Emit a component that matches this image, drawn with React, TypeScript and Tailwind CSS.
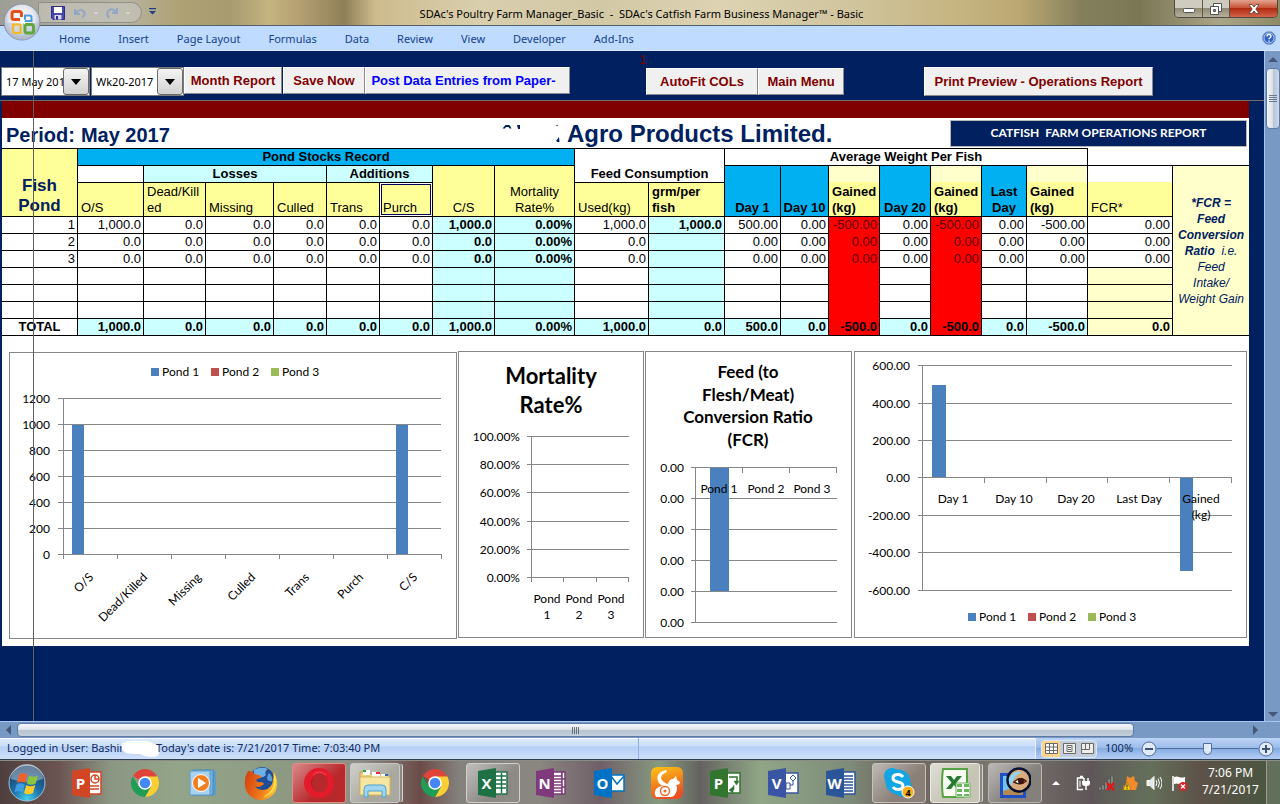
import React from "react";

const GRID = "border-r border-b border-black p-0 px-[3px]";

const columnWidths = [
  "w-[76px]", "w-[66px]", "w-[62px]", "w-[68px]", "w-[53px]", "w-[53px]", "w-[53px]",
  "w-[62px]", "w-[80px]", "w-[74px]", "w-[76px]", "w-[56px]", "w-[48px]", "w-[51px]",
  "w-[51px]", "w-[51px]", "w-[45px]", "w-[61px]", "w-[85px]", "w-[76px]",
];

const dataRows: string[][] = [
  ["1", "1,000.0", "0.0", "0.0", "0.0", "0.0", "0.0", "1,000.0", "0.00%", "1,000.0", "1,000.0", "500.00", "0.00", "-500.00", "0.00", "-500.00", "0.00", "-500.00", "0.00"],
  ["2", "0.0", "0.0", "0.0", "0.0", "0.0", "0.0", "0.0", "0.00%", "0.0", "", "0.00", "0.00", "0.00", "0.00", "0.00", "0.00", "0.00", "0.00"],
  ["3", "0.0", "0.0", "0.0", "0.0", "0.0", "0.0", "0.0", "0.00%", "0.0", "", "0.00", "0.00", "0.00", "0.00", "0.00", "0.00", "0.00", "0.00"],
  Array(19).fill(""),
  Array(19).fill(""),
  Array(19).fill(""),
];

const totals = ["1,000.0", "0.0", "0.0", "0.0", "0.0", "0.0", "1,000.0", "0.00%", "1,000.0", "0.0", "500.0", "0.0", "-500.0", "0.0", "-500.0", "0.0", "-500.0", "0.0"];

function bodyCellClass(col: number, row: number) {
  if (col === 13 || col === 15) return "bg-[#ff0000] text-[#5a0000] border-b-[#ff0000]";
  if (col === 7 || col === 8 || col === 10) return "bg-[#ccffff] font-bold border-b-black";
  if (col === 18 && row > 2) return "bg-[#ffffcc] border-b-black";
  return "bg-white border-b-black";
}

function totalCellClass(col: number) {
  if (col === 13 || col === 15) return "bg-[#ff0000]";
  if (col === 18) return "bg-[#ffffcc]";
  return "bg-[#ccffff]";
}

function PondTable() {
  const blue = "bg-[#00b0f0] font-bold text-center align-bottom";
  const yellow = "bg-[#ffff99] font-normal align-bottom";
  const gained = "bg-[linear-gradient(#ffffcc_16px,#ffff99_16px)] font-bold text-left align-bottom";
  return (
    <table className="w-full table-fixed border-separate border-spacing-0 text-[13px] leading-4 text-black">
      <colgroup>
        {columnWidths.map((w, i) => (
          <col key={i} className={w} />
        ))}
      </colgroup>
      <tbody>
        <tr className="h-[18px]">
          <th rowSpan={3} className={`${GRID} border-t bg-[#ffff99] text-center align-bottom text-[17px] leading-5 text-[#002060]`}>
            Fish<br />Pond
          </th>
          <th colSpan={8} className={`${GRID} ${blue} border-t`}>Pond Stocks Record</th>
          <th colSpan={2} rowSpan={2} className={`${GRID} border-t bg-white text-center align-bottom`}>Feed Consumption</th>
          <th colSpan={7} className={`${GRID} border-t bg-white text-center`}>Average Weight Per Fish</th>
          <td className="border-b border-black p-0" />
          <td className="border-b border-black p-0" />
        </tr>
        <tr className="h-[17px]">
          <td className={`${GRID} bg-white`} />
          <th colSpan={3} className={`${GRID} bg-[#ccffff] text-center`}>Losses</th>
          <th colSpan={2} className={`${GRID} bg-[#ccffff] text-center`}>Additions</th>
          <th rowSpan={2} className={`${GRID} ${yellow} text-center`}>C/S</th>
          <th rowSpan={2} className={`${GRID} ${yellow} text-center`}>Mortality Rate%</th>
          <th rowSpan={2} className={`${GRID} ${blue}`}>Day 1</th>
          <th rowSpan={2} className="border-r border-b border-black bg-[#00b0f0] p-0 text-center align-bottom">Day 10</th>
          <th rowSpan={2} className={`${GRID} ${gained}`}>Gained (kg)</th>
          <th rowSpan={2} className="border-r border-b border-black bg-[#00b0f0] p-0 text-center align-bottom">Day 20</th>
          <th rowSpan={2} className={`${GRID} ${gained}`}>Gained (kg)</th>
          <th rowSpan={2} className={`${GRID} ${blue}`}>Last Day</th>
          <th rowSpan={2} className={`${GRID} ${gained}`}>Gained (kg)</th>
          <th rowSpan={2} className={`${GRID} bg-[linear-gradient(#ffffff_16px,#ffff99_16px)] text-left align-bottom font-normal`}>FCR*</th>
          <td rowSpan={9} className="border-b border-black bg-[#ffffcc] p-0 text-center align-middle text-[12px] italic leading-4 text-[#002060]">
            <b>*FCR =<br />Feed<br />Conversion<br />Ratio</b>&nbsp; i.e.<br />Feed<br />Intake/<br />Weight Gain
          </td>
        </tr>
        <tr className="h-[34px]">
          <th className={`${GRID} ${yellow} text-left`}>O/S</th>
          <th className={`${GRID} ${yellow} text-left break-all`}>Dead/Killed</th>
          <th className={`${GRID} ${yellow} text-left`}>Missing</th>
          <th className={`${GRID} ${yellow} text-left`}>Culled</th>
          <th className={`${GRID} ${yellow} text-left`}>Trans</th>
          <th className={`${GRID} ${yellow} text-left shadow-[inset_0_0_0_1px_#fff,inset_0_0_0_2px_#000060]`}>Purch</th>
          <th className={`${GRID} ${yellow} text-left`}>Used(kg)</th>
          <th className={`${GRID} bg-[#ffff99] text-left align-bottom`}>grm/per fish</th>
        </tr>
        {dataRows.map((row, r) => (
          <tr key={r} className="h-[17px] text-right">
            {row.map((value, c) => (
              <td key={c} className={`border-r border-r-black border-b p-0 pr-0.5 ${bodyCellClass(c, r)}`}>{value}</td>
            ))}
          </tr>
        ))}
        <tr className="h-[17px] text-right font-bold">
          <th className={`${GRID} bg-white text-center`}>TOTAL</th>
          {totals.map((value, i) => (
            <td key={i} className={`border-r border-b border-black p-0 pr-0.5 ${totalCellClass(i + 1)}`}>{value}</td>
          ))}
        </tr>
      </tbody>
    </table>
  );
}

/* ---------- charts ---------- */

const AXIS = "#868686";
const BAR = "#4a80bd";

function ChartText({ x, y, anchor = "middle", children }: { x: number; y: number; anchor?: "start" | "middle" | "end"; children: React.ReactNode }) {
  return <text x={x} y={y} textAnchor={anchor} fontSize={12} fill="#000">{children}</text>;
}

function Legend({ x, y }: { x: number; y: number }) {
  const items = [
    { label: "Pond 1", color: "#4a80bd" },
    { label: "Pond 2", color: "#c0504d" },
    { label: "Pond 3", color: "#9bbb59" },
  ];
  return (
    <g>
      {items.map((item, i) => (
        <g key={item.label}>
          <rect x={x + i * 60} y={y} width={8} height={8} fill={item.color} />
          <ChartText x={x + i * 60 + 11} y={y + 8} anchor="start">{item.label}</ChartText>
        </g>
      ))}
    </g>
  );
}

function StockChart() {
  const cats = ["O/S", "Dead/Killed", "Missing", "Culled", "Trans", "Purch", "C/S"];
  return (
    <svg viewBox="9 351 448 288" className="block w-full" role="img" aria-label="Pond stocks">
      <rect x={9.5} y={352.5} width={447} height={286} fill="#fff" stroke={AXIS} />
      <Legend x={151} y={368} />
      <g stroke={AXIS}>
        {[0, 1, 2, 3, 4, 5, 6].map((i) => (
          <line key={i} x1={58} x2={441} y1={398.5 + i * 26} y2={398.5 + i * 26} />
        ))}
        <line x1={63.5} x2={63.5} y1={398} y2={559} />
        {[1, 2, 3, 4, 5, 6, 7].map((i) => (
          <line key={i} x1={63.5 + i * 54} x2={63.5 + i * 54} y1={554} y2={559} />
        ))}
      </g>
      <rect x={72} y={425} width={12} height={129} fill={BAR} />
      <rect x={396} y={425} width={12} height={129} fill={BAR} />
      {[1200, 1000, 800, 600, 400, 200, 0].map((v, i) => (
        <ChartText key={v} x={50} y={403 + i * 26} anchor="end">{v}</ChartText>
      ))}
      {cats.map((c, i) => (
        <text key={c} transform={`translate(${94 + i * 54} 578) rotate(-45)`} textAnchor="end" fontSize={12} fill="#000">{c}</text>
      ))}
    </svg>
  );
}

function MortalityChart() {
  return (
    <svg viewBox="458 351 186 288" className="block w-full" role="img" aria-label="Mortality rate">
      <rect x={458.5} y={351.5} width={185} height={286} fill="#fff" stroke={AXIS} />
      <g fontSize={22} fontWeight={700} textAnchor="middle" fill="#000">
        <text x={551} y={384}>Mortality</text>
        <text x={551} y={413}>Rate%</text>
      </g>
      <g stroke={AXIS}>
        {[436.5, 464.5, 492.5, 521.5, 549.5, 577.5].map((y) => (
          <line key={y} x1={527} x2={629} y1={y} y2={y} />
        ))}
        {[531.5, 563.5, 596.5, 628.5].map((x, i) => (
          <line key={x} x1={x} x2={x} y1={i === 0 ? 436 : 577} y2={582} />
        ))}
      </g>
      {["100.00%", "80.00%", "60.00%", "40.00%", "20.00%", "0.00%"].map((v, i) => (
        <ChartText key={v} x={520} y={441 + Math.round(i * 28.2)} anchor="end">{v}</ChartText>
      ))}
      {[1, 2, 3].map((n, i) => (
        <g key={n}>
          <ChartText x={547 + i * 32} y={603}>Pond</ChartText>
          <ChartText x={547 + i * 32} y={619}>{n}</ChartText>
        </g>
      ))}
    </svg>
  );
}

function FcrChart() {
  return (
    <svg viewBox="645 351 207 288" className="block w-full" role="img" aria-label="Feed conversion ratio">
      <rect x={645.5} y={351.5} width={206} height={286} fill="#fff" stroke={AXIS} />
      <g fontSize={17} fontWeight={700} textAnchor="middle" fill="#000">
        <text x={748} y={378}>Feed (to</text>
        <text x={748} y={401}>Flesh/Meat)</text>
        <text x={748} y={423}>Conversion Ratio</text>
        <text x={748} y={446}>(FCR)</text>
      </g>
      <g stroke={AXIS}>
        {[0, 1, 2, 3, 4, 5].map((i) => (
          <line key={i} x1={691} x2={837} y1={467.5 + i * 31} y2={467.5 + i * 31} />
        ))}
        <line x1={695.5} x2={695.5} y1={467} y2={623} />
        {[742.5, 789.5, 836.5].map((x) => (
          <line key={x} x1={x} x2={x} y1={467} y2={473} />
        ))}
      </g>
      <rect x={710} y={468} width={19} height={123} fill={BAR} />
      {[0, 1, 2, 3, 4, 5].map((i) => (
        <ChartText key={i} x={684} y={472 + i * 31} anchor="end">0.00</ChartText>
      ))}
      <ChartText x={719} y={493}>Pond 1</ChartText>
      <ChartText x={766} y={493}>Pond 2</ChartText>
      <ChartText x={812} y={493}>Pond 3</ChartText>
    </svg>
  );
}

function WeightChart() {
  const lines = [365.5, 403.5, 440.5, 477.5, 515.5, 552.5, 590.5];
  const labels = ["600.00", "400.00", "200.00", "0.00", "-200.00", "-400.00", "-600.00"];
  return (
    <svg viewBox="854 351 393 288" className="block w-full" role="img" aria-label="Average weight per fish">
      <rect x={854.5} y={351.5} width={392} height={286} fill="#fff" stroke={AXIS} />
      <g stroke={AXIS}>
        {lines.map((y) => (
          <line key={y} x1={918} x2={1232} y1={y} y2={y} />
        ))}
        <line x1={922.5} x2={922.5} y1={365} y2={591} />
        {[984.5, 1046.5, 1107.5, 1169.5, 1231.5].map((x) => (
          <line key={x} x1={x} x2={x} y1={477} y2={483} />
        ))}
      </g>
      <rect x={932} y={385} width={14} height={92} fill={BAR} />
      <rect x={1180} y={478} width={13} height={93} fill={BAR} />
      {labels.map((v, i) => (
        <ChartText key={v} x={910} y={lines[i] + 4.5} anchor="end">{v}</ChartText>
      ))}
      <ChartText x={953} y={503}>Day 1</ChartText>
      <ChartText x={1014} y={503}>Day 10</ChartText>
      <ChartText x={1076} y={503}>Day 20</ChartText>
      <ChartText x={1139} y={503}>Last Day</ChartText>
      <ChartText x={1201} y={503}>Gained</ChartText>
      <ChartText x={1201} y={519}>(kg)</ChartText>
      <Legend x={968} y={613} />
    </svg>
  );
}

/* ---------- window chrome ---------- */

function OfficeOrb() {
  return (
    <svg viewBox="0 0 38 38" className="size-[38px]" aria-hidden="true">
      <defs>
        <radialGradient id="orb" cx="50%" cy="40%" r="60%">
          <stop offset="0" stopColor="#ffffff" />
          <stop offset="0.6" stopColor="#e3e6ec" />
          <stop offset="1" stopColor="#9aa7bd" />
        </radialGradient>
      </defs>
      <circle cx="19" cy="19" r="18" fill="url(#orb)" stroke="#8b93a3" />
      <path d="M2 20a17 17 0 0 0 34 0z" fill="#b9c3d6" opacity=".45" />
      <g fill="none" strokeWidth="3">
        <path d="M17 16.500h-6q-2 0-2-2v-4q0-2 2-2h5q2.500 0 2.500 2.500v3" stroke="#e2511a" />
        <path d="M22 12.500h4.500q2 0 2 2v3.500h-6.500z" stroke="#4e9bdc" strokeWidth="2" />
        <path d="M10 21.500h7.500v8.500h-5.500q-2 0-2-2z" stroke="#f5b921" strokeWidth="2.200" />
        <path d="M22 21.500h6.500q2 0 2 2v4.500q0 2-2 2h-4.500q-2 0-2-2z" stroke="#5fa83c" />
      </g>
      <path d="M18 17l4 4m0-4l-4 4" stroke="#fff" strokeWidth="1.200" />
    </svg>
  );
}

function TitleBar() {
  return (
    <header className="relative flex h-[25px] shrink-0 items-start bg-[linear-gradient(90deg,#9d9d97_0,#b9b5a4_120px,#aea174_180px,#a89b70_230px,#c4b580_270px,#b49f72_300px,#8f8058_345px,#cdbb8d_375px,#d9cfae_480px,#d2c8a6_600px,#ddd3b2_720px,#cfc39c_860px,#c6b480_960px,#bba873_1020px,#85805c_1080px,#7b7654_1140px,#aaa588_1220px,#8e8966_1280px)]">
      <div className="ml-[38px] mt-0.5 flex h-[21px] w-[104px] items-center rounded-r-full border border-[#8f8f87] bg-[#c3c1b6]/80 pl-3">
        <button aria-label="Save" className="mr-2">
          <svg viewBox="0 0 14 14" className="size-[14px]">
            <path d="M.5.500h13v13H2L.5 12z" fill="#4a48b0" stroke="#2e2c86" />
            <rect x="3" y="1" width="8" height="6" fill="#fff" />
            <rect x="3.500" y="9" width="7" height="4.500" fill="#d8d8e8" />
            <rect x="5" y="10" width="2" height="3.500" fill="#2e2c86" />
          </svg>
        </button>
        <button aria-label="Undo" className="flex items-center gap-1.5">
          <svg viewBox="0 0 14 14" className="size-[14px]" fill="none" stroke="#8fa6c4" strokeWidth="2"><path d="M2 3v5h5M3 7q4-5 8-1.500q2 3-2 6" /></svg>
          <svg viewBox="0 0 6 4" className="h-1 w-1.5" fill="none" stroke="#e6e6e0"><path d="M1 1l2 2l2-2" /></svg>
        </button>
        <button aria-label="Redo" className="ml-1.5 flex items-center gap-1.5">
          <svg viewBox="0 0 14 14" className="size-[14px]" fill="none" stroke="#8fa6c4" strokeWidth="2"><path d="M12 2v5h-5M11 6q-4-5-8-1q-2 3 1 7" /></svg>
          <svg viewBox="0 0 6 4" className="h-1 w-1.5" fill="none" stroke="#e6e6e0"><path d="M1 1l2 2l2-2" /></svg>
        </button>
      </div>
      <button aria-label="Customize Quick Access Toolbar" className="ml-[7px] mt-2">
        <svg viewBox="0 0 7 7" className="block size-[7px]" fill="#1f3f86"><path d="M0 0h7v1.200H0zM0 3h7L3.500 6.500z" /></svg>
      </button>
      <h1 className="flex-1 truncate text-center text-[11px] leading-[27px] text-black">
        SDAc's Poultry Farm Manager_Basic&nbsp; -&nbsp; SDAc's Catfish Farm Business Manager™ - Basic
      </h1>
      <div className="ml-[47px] mr-[2px] flex h-[18px] w-[104px] overflow-hidden rounded-b-[5px] border border-t-0 border-[#4e4b40] text-white">
        <button aria-label="Minimize" className="flex w-7 items-center justify-center border-r border-[#5b5848] bg-[linear-gradient(#cfccbf_45%,#8f8b74_50%,#b4b09b)]">
          <svg viewBox="0 0 12 5" className="mt-1 h-[5px] w-3"><rect x=".5" y=".5" width="11" height="4" rx="1" fill="#fff" stroke="#555" /></svg>
        </button>
        <button aria-label="Restore Down" className="flex w-[27px] items-center justify-center border-r border-[#5b5848] bg-[linear-gradient(#cfccbf_45%,#8f8b74_50%,#b4b09b)]">
          <svg viewBox="0 0 12 12" className="size-3" fill="#fff" stroke="#555"><path d="M3.500.500h8v8h-8z" /><path d="M.5 3.500h8v8h-8z" /><path d="M3.500 6.500h2v2h-2z" fill="#8f8b74" /></svg>
        </button>
        <button aria-label="Close" className="flex flex-1 items-center justify-center bg-[linear-gradient(#e3a48f_0,#c9553a_45%,#b02a10_50%,#d5634a)]">
          <svg viewBox="0 0 12 10" className="h-2.5 w-3"><path d="M1 .5h3L6 3L8 .500h3L7.800 5L11 9.500H8L6 7L4 9.500H1L4.200 5z" fill="#fff" stroke="#5a3a35" strokeWidth=".8" /></svg>
        </button>
      </div>
      <button aria-label="Office Button" className="absolute left-[3px] top-[3px] z-10"><OfficeOrb /></button>
    </header>
  );
}

const tabs = ["Home", "Insert", "Page Layout", "Formulas", "Data", "Review", "View", "Developer", "Add-Ins"];

function RibbonTabs() {
  return (
    <nav className="flex h-[26px] shrink-0 items-center border-t border-b border-t-[#55606e] border-b-[#dbe8fa] bg-[#bfdbff] pl-[59px] pr-1 text-[11px] text-[#15428b]">
      <div className="flex gap-[28px] pt-0.5">
        {tabs.map((t) => (
          <button key={t}>{t}</button>
        ))}
      </div>
      <button aria-label="Help" className="ml-auto">
        <svg viewBox="0 0 14 14" className="size-[14px]">
          <circle cx="7" cy="7" r="6.500" fill="#2c62c8" stroke="#8aa5d6" />
          <circle cx="7" cy="7" r="5" fill="none" stroke="#fff" strokeWidth=".7" />
          <path d="M5 5.500q0-2 2-2t2 1.800q0 1-1.200 1.700q-.8.500-.8 1.200M7 9.500v1.300" fill="none" stroke="#fff" strokeWidth="1.400" />
        </svg>
      </button>
    </nav>
  );
}

function ComboBox({ label, value, className }: { label: string; value: string; className: string }) {
  return (
    <div className={`relative border border-[#7a7a7a] bg-white ${className}`}>
      <select aria-label={label} className="size-full appearance-none bg-transparent pl-1 text-[11px] text-black outline-none" defaultValue={value}>
        <option>{value}</option>
      </select>
      <span className="pointer-events-none absolute inset-y-0 right-0 flex w-[26px] items-center justify-center rounded-[3px] border border-[#6a6a6a] bg-[linear-gradient(#f4f4f4,#d2d2d2)]">
        <svg viewBox="0 0 10 6" className="h-1.5 w-2.5"><path d="M0 0h10L5 6z" fill="#000" /></svg>
      </span>
    </div>
  );
}

function SheetButton({ className, children }: { className: string; children: React.ReactNode }) {
  return (
    <button className={`whitespace-nowrap border border-t-white border-l-white border-r-[#8a8a8a] border-b-[#8a8a8a] bg-[#f0f0f0] text-[13px] font-bold ${className}`}>
      {children}
    </button>
  );
}

function SheetToolbar() {
  return (
    <div className="h-[50px] shrink-0 border-b border-[#6b6b6b] font-['Liberation_Sans',Arial,sans-serif]">
      <p className="h-4 pl-[22px] text-center text-[13px] leading-[17px] text-[#800000]">1</p>
      <div className="flex items-start pl-px">
        <ComboBox label="Date" value="17 May 201" className="h-[29px] w-[89px] font-['Noto_Sans',sans-serif]" />
        <ComboBox label="Week" value="Wk20-2017" className="ml-px h-[29px] w-[93px] font-['Noto_Sans',sans-serif]" />
        <SheetButton className="h-[27px] w-[98px] text-[#800000]">Month Report</SheetButton>
        <SheetButton className="ml-px h-[27px] w-[82px] text-[#800000]">Save Now</SheetButton>
        <SheetButton className="h-[27px] w-[205px] pr-2 text-[#0000ff]">Post Data Entries from Paper-</SheetButton>
        <SheetButton className="ml-[76px] mt-px h-[27px] w-[112px] text-[#800000]">AutoFit COLs</SheetButton>
        <SheetButton className="mt-px h-[27px] w-[86px] text-[#800000]">Main Menu</SheetButton>
        <SheetButton className="ml-[80px] h-[29px] w-[229px] text-[#800000]">Print Preview - Operations Report</SheetButton>
      </div>
    </div>
  );
}

function ReportHeading() {
  return (
    <div className="flex h-[30px] items-center bg-white pl-1 text-[#002060]">
      <h2 className="flex w-[495px] gap-1.5 pt-1 text-[20px] font-bold leading-6">
        <span>Period:</span>
        <span>May 2017</span>
      </h2>
      <svg viewBox="0 0 60 24" className="mr-[6px] h-6 w-[60px] shrink-0" fill="#002060" aria-hidden="true">
        <path d="M1.500 7.500L4.500 4h4l2 3.500h-2l-1-1.500h-2.500l-1 1.500zM16 4h3v4h-2zM54 5l2.500-1l.5 1zM55 20l3-4l.5 5h-2z" />
      </svg>
      <p className="whitespace-nowrap pt-0.5 text-[24px] font-bold leading-7">Agro Products Limited.</p>
      <p className="ml-auto mr-[2px] flex h-[27px] w-[297px] items-center justify-center whitespace-pre border border-[#b8b8b8] bg-[#002060] font-['Lato',sans-serif] text-[12px] font-bold text-white">
        CATFISH  FARM OPERATIONS REPORT
      </p>
    </div>
  );
}

function VerticalScrollbar() {
  return (
    <div className="flex w-4 shrink-0 flex-col items-center border-l border-[#a9c6ee] bg-[#7799c4]" aria-hidden="true">
      <svg viewBox="0 0 10 5" className="mb-1.5 mt-1.5 h-[5px] w-2.5"><path d="M0 5L5 0L10 5z" fill="#46587a" /></svg>
      <div className="flex h-[61px] w-[14px] items-center justify-center rounded-sm border border-[#5d7aa6] bg-[linear-gradient(90deg,#f2f5fa,#dde3ec_45%,#b9c5d6_55%,#cfd8e5)]">
        <svg viewBox="0 0 8 7" className="h-[7px] w-2" stroke="#6b7a92"><path d="M0 .5h8M0 2.500h8M0 4.500h8M0 6.500h8" /></svg>
      </div>
      <svg viewBox="0 0 10 5" className="mb-1 mt-auto h-[5px] w-2.5"><path d="M0 0L5 5L10 0z" fill="#46587a" /></svg>
    </div>
  );
}

function HorizontalScrollbar() {
  return (
    <div className="flex h-[17px] shrink-0 items-center border-t border-[#a9c6ee] bg-[#7799c4]" aria-hidden="true">
      <svg viewBox="0 0 5 10" className="mx-1.5 h-2.5 w-[5px]"><path d="M5 0L0 5L5 10z" fill="#46587a" /></svg>
      <div className="flex h-[14px] flex-1 items-center justify-center rounded-sm border border-[#5d7aa6] bg-[linear-gradient(#f4f6f9,#dfe4ec_45%,#b7c3d1_55%,#c6d0dc)]">
        <svg viewBox="0 0 8 7" className="h-[7px] w-2" stroke="#6b6f7a"><path d="M.5 0v7M2.500 0v7M4.500 0v7M6.500 0v7" /></svg>
      </div>
      <svg viewBox="0 0 5 10" className="ml-[119px] mr-[22px] h-2.5 w-[5px]"><path d="M0 0L5 5L0 10z" fill="#46587a" /></svg>
    </div>
  );
}

function ZoomButton({ sign }: { sign: "minus" | "plus" }) {
  return (
    <button aria-label={sign === "plus" ? "Zoom in" : "Zoom out"}>
      <svg viewBox="0 0 16 16" className="block size-4">
        <circle cx="8" cy="8" r="7" fill="#dfe9f8" stroke="#4f6d9e" />
        <path d={sign === "plus" ? "M4 8h8M8 4v8" : "M4 8h8"} stroke="#3d5276" strokeWidth="2" />
      </svg>
    </button>
  );
}

function StatusBar() {
  const viewButton = "flex h-4 w-[18px] items-center justify-center";
  return (
    <div className="flex h-[22px] shrink-0 border-b border-[#303c50] bg-[linear-gradient(#ffffff_1px,#dceafd_1px,#c9defa_38%,#b4cef6_42%,#cfe0f9)] text-[11px] text-[#0f2a5c]">
      <p className="flex w-[639px] shrink-0 items-center whitespace-nowrap border-r border-[#8fb0de] pl-[7px]">
        Logged in User: Bashir
        <svg viewBox="0 0 40 17" className="-ml-1 -mr-1 h-[17px] w-10" aria-hidden="true">
          <path d="M2 3q8-3 20-2q9 0 12 3q6 0 6 5q0 7-6 8q-9 0-14-3q-9 0-14-1q-6-3-4-10z" fill="#fff" />
        </svg>
        Today's date is: 7/21/2017 Time: 7:03:40 PM
      </p>
      <div className="flex-1 border-r border-[#e8f1fd]" />
      <div className="flex items-center bg-[linear-gradient(#bcd4f6,#9dbdea_45%,#86ace2_50%,#b4cef4)] pl-[5px] pr-1.5">
        <div className="mr-2 flex rounded-sm border border-[#dbe8fa] bg-[#c3cddb]">
          <button aria-label="Normal" className={`${viewButton} bg-[#fbd58a]`}>
            <svg viewBox="0 0 13 11" className="h-[11px] w-[13px]" fill="#fff" stroke="#6b6a66"><path d="M.5.500h12v10H.5zM4.500.500v10M8.500.500v10M.5 4h12M.5 7.500h12" /></svg>
          </button>
          <button aria-label="Page Layout view" className={viewButton}>
            <svg viewBox="0 0 13 11" className="h-[11px] w-[13px]" fill="#eee" stroke="#6b6a66"><path d="M.5.500h12v10H.5zM4 2.500h5v6H4zM5 4.500h3M5 6.500h3" /></svg>
          </button>
          <button aria-label="Page Break Preview" className={viewButton}>
            <svg viewBox="0 0 13 11" className="h-[11px] w-[13px]" fill="#eee" stroke="#6b6a66"><path d="M.5.500h12v10H.5zM4.500.500v6M8.500.500v6M.5 6.500h8" /></svg>
          </button>
        </div>
        <button className="mr-2 w-7">100%</button>
        <ZoomButton sign="minus" />
        <input
          type="range"
          aria-label="Zoom"
          defaultValue={50}
          className="h-4 w-[101px] appearance-none bg-[linear-gradient(#4f6d9e,#4f6d9e)] bg-[length:100%_1px] bg-center bg-no-repeat [&::-webkit-slider-thumb]:h-3 [&::-webkit-slider-thumb]:w-[9px] [&::-webkit-slider-thumb]:appearance-none [&::-webkit-slider-thumb]:rounded-b-full [&::-webkit-slider-thumb]:border [&::-webkit-slider-thumb]:border-[#4f6d9e] [&::-webkit-slider-thumb]:bg-[#dfe9f8]"
        />
        <ZoomButton sign="plus" />
      </div>
    </div>
  );
}

/* ---------- taskbar ---------- */

function OfficeTile({ letter, color, children }: { letter: string; color: string; children: React.ReactNode }) {
  return (
    <svg viewBox="0 0 32 32" className="size-8">
      <g fill="#fff" stroke={color} strokeWidth="1.500">{children}</g>
      <path d="M1 4L19 1v30L1 28z" fill={color} />
      <text x="9.500" y="21.500" textAnchor="middle" fontSize="15" fontWeight="700" fill="#fff" fontFamily="Open Sans, sans-serif">{letter}</text>
    </svg>
  );
}

function Chrome() {
  return (
    <svg viewBox="0 0 32 32" className="size-8">
      <path d="M16 16L3.900 9A14 14 0 0 1 28.100 9z" fill="#e0433a" />
      <path d="M16 9.500H28.400A14 14 0 0 1 16 30L22 19.500z" fill="#fbcf33" />
      <path d="M22 19.500L16 30A14 14 0 0 1 3.600 9.500L10 19.500z" fill="#1f9d57" />
      <circle cx="16" cy="16" r="6.800" fill="#fff" />
      <circle cx="16" cy="16" r="5.300" fill="#4587f4" />
    </svg>
  );
}

function Firefox() {
  return (
    <svg viewBox="0 0 34 34" className="size-[34px]">
      <defs>
        <linearGradient id="fox" x1="0" x2="1" y1=".3" y2=".6">
          <stop offset="0" stopColor="#d4430f" />
          <stop offset=".6" stopColor="#f07c1c" />
          <stop offset="1" stopColor="#fdc832" />
        </linearGradient>
      </defs>
      <circle cx="18" cy="13" r="12" fill="#1f4d96" />
      <path d="M10 4q7-4 14-1q-4 2-2 6q-4 4-8 1q-5 0-4-6z" fill="#6fb0e4" />
      <path d="M25 7q4 3 3 8q-4 1-5-3q0-3 2-5z" fill="#5a9ad6" />
      <path d="M4 5q-4 7-3 14A16 15.500 0 0 0 33 18Q33 10 29 5q1 5 0 8q0 9-9 11q-7 0-9-4q3 2 6 0q2-1 3-2q-1-2-3-2q-4 1-5-2q2-2 5-2q1-2-2-3q-5 0-6-3q-3-1-5-1z" fill="url(#fox)" />
      <path d="M30 7q4 7 1 14q-3 8-12 10q10-5 11-14z" fill="#fde04a" />
    </svg>
  );
}

function StartOrb() {
  return (
    <svg viewBox="0 0 38 38" className="size-[38px]">
      <defs>
        <radialGradient id="start" cx="50%" cy="95%" r="90%">
          <stop offset="0" stopColor="#3fd0ee" />
          <stop offset=".45" stopColor="#1c6fa8" />
          <stop offset="1" stopColor="#1b3d63" />
        </radialGradient>
      </defs>
      <circle cx="19" cy="19" r="18" fill="url(#start)" stroke="#9fc0d6" />
      <path d="M3 15a16 15 0 0 1 32 0q-16 6-32 0z" fill="#fff" opacity=".35" />
      <path d="M11 10.500q4-3 8.500 0l-2.200 8.500q-4-2.500-8.300 0z" fill="#f0612b" />
      <path d="M21 11.500q4 2.500 9 0l-2.200 8q-5 2.500-9 0z" fill="#8cc63c" />
      <path d="M8.500 20.500q4-2.500 8.300 0l-2.200 8q-4-2.500-8.300 0z" fill="#3c9fe0" />
      <path d="M18.300 21q4 2.500 9 0l-2.200 8q-5 2.500-9 0z" fill="#fcc927" />
    </svg>
  );
}

const apps: { name: string; tile?: string; stacked?: boolean; icon: React.ReactNode }[] = [
  { name: "PowerPoint", icon: <OfficeTile letter="P" color="#d24625"><path d="M17 5h13v22H17z" /><circle cx="24" cy="12" r="4" /><path d="M24 8v4h4M19 19h9M19 22h9" /></OfficeTile> },
  { name: "Chrome", icon: <Chrome /> },
  { name: "Windows Media Player", icon: (
    <svg viewBox="0 0 32 32" className="size-8"><rect x="9" y="4" width="20" height="24" fill="#5b9ccc" /><rect x="6" y="3" width="20" height="25" fill="#79b4de" stroke="#4788b8" /><rect x="3" y="4" width="20" height="24" fill="#a9d2ee" stroke="#5b9ccc" /><circle cx="14" cy="16" r="8.500" fill="#f08122" stroke="#fff" /><path d="M11 11l8 5l-8 5z" fill="#fff" /></svg>
  ) },
  { name: "Firefox", icon: <Firefox /> },
  { name: "Opera", tile: "border-[#e58b86] bg-[#b8292c]", icon: (
    <svg viewBox="0 0 32 32" className="size-8"><circle cx="16" cy="16" r="11.500" fill="#a81c22" stroke="#e31b2a" strokeWidth="7" /><ellipse cx="17" cy="16" rx="8" ry="9.500" fill="#b8292c" /><path d="M10 8q6-6 13 0" fill="none" stroke="#f0505a" /></svg>
  ) },
  { name: "Windows Explorer", tile: "border-[#c8c8c4] bg-[#a9a8a0]", stacked: true, icon: (
    <svg viewBox="0 0 34 32" className="h-8 w-[34px]"><path d="M2 5h7l2 2h11l2 2h8v19H2z" fill="#e9cf79" stroke="#c0a24c" /><path d="M5 3h7v5H5z" fill="#fff" /><path d="M5 3h3v2H5z" fill="#2c9b3f" /><path d="M14 5h8v5h-8zM23 7h7v4h-7z" fill="#fff" /><path d="M18 5h4v2h-4z" fill="#d33" /><path d="M27 7h3v2h-3z" fill="#36c" /><path d="M2 10h30v18H2z" fill="#f6e6a2" stroke="#d2b65c" /><path d="M6 30v-8q0-4 4-4h14q4 0 4 4v8h-4v-6H10v6z" fill="#9fd5ef" stroke="#4fa3cf" /></svg>
  ) },
  { name: "Chrome profile", icon: <Chrome /> },
  { name: "Excel", tile: "border-[#d0cfcc] bg-[#8d8a86]", icon: <OfficeTile letter="X" color="#1e7145"><path d="M17 5h13v22H17zM19 9h10M19 13h10M19 17h10M19 21h10M24.500 6v20" /></OfficeTile> },
  { name: "OneNote", icon: <OfficeTile letter="N" color="#80397b"><path d="M17 5h10v22H17zM19 9h7M19 12h7M19 15h7M19 18h7M19 21h7M19 24h7" /><path d="M27 5h3v7h-3zM27 12h3v8h-3zM27 20h3v7h-3z" /></OfficeTile> },
  { name: "Outlook", icon: <OfficeTile letter="O" color="#0072c6"><path d="M17 8h14v16H17z" /><path d="M18 9l6 8l7-8" /></OfficeTile> },
  { name: "UC Browser", icon: (
    <svg viewBox="0 0 34 34" className="size-[34px]"><defs><linearGradient id="uc" x2=".3" y2="1"><stop offset="0" stopColor="#fdc514" /><stop offset="1" stopColor="#ea4f25" /></linearGradient></defs><rect x="1" y="1" width="32" height="32" rx="6" fill="url(#uc)" /><path d="M16 4Q5 7 8 15q1 4 6 5q-7 0-9 5q-1 3 1 6h15q5-1 6-8q0-3-1-4q4 0 4-3l-3-2l-1-4l-3 3q-4 0-5 5q-6-2-7-6q0-4 6-6z" fill="#fff" /><circle cx="15" cy="25" r="4.500" fill="none" stroke="#ee6a2b" strokeWidth="1.500" /><circle cx="15" cy="25" r="1.500" fill="#ee6a2b" /></svg>
  ) },
  { name: "Project", icon: <OfficeTile letter="P" color="#31752f"><path d="M17 6h14v20H17z" /><path d="M20 10h8v6" fill="none" /><path d="M25 14h5l-2.500 4zM25 18v5h-3M24 20v6l-4-3z" fill="#31752f" strokeWidth=".5" /></OfficeTile> },
  { name: "Visio", icon: <OfficeTile letter="V" color="#3955a3"><path d="M17 6h14v20H17z" /><path d="M26 8l3 3l-3 3l-3-3zM26 14v4h-3M19 16h4v6h-4z" strokeWidth="1" /></OfficeTile> },
  { name: "Word", icon: <OfficeTile letter="W" color="#2a5699"><path d="M17 5h13v22H17zM19 9h9M19 12h9M19 15h9M19 18h9M19 21h9M19 24h9" /></OfficeTile> },
  { name: "Skype", tile: "border-[#c4c2ba] bg-[#8a8078]", icon: (
    <svg viewBox="0 0 32 32" className="size-8"><circle cx="9" cy="9" r="8" fill="#12a5e4" /><circle cx="20" cy="21" r="9" fill="#12a5e4" /><circle cx="15" cy="15" r="12.500" fill="#12a5e4" /><path d="M20 10q-2-3-6-2.500q-4 .5-4 3.500t5 4t5 4t-4 3.500q-4 .3-6-2.500" fill="none" stroke="#fff" strokeWidth="3" /><circle cx="25" cy="25" r="6" fill="#fbb017" stroke="#fff" /><text x="25" y="28.500" textAnchor="middle" fontSize="9" fontWeight="700">4</text></svg>
  ) },
  { name: "Excel 2007", tile: "border-[#e8e8e4] bg-[#c6c4b4]", stacked: true, icon: (
    <svg viewBox="0 0 32 32" className="size-8"><path d="M4 2h24v25l-4 3H4q-2-14 0-28z" fill="#f7fbf2" stroke="#56a345" strokeWidth="2" /><path d="M7 9h5l3 4l3-4h5l-5.500 6.500L23 22h-5l-3-4l-3 4H7l5.500-6.500z" fill="#277a34" /><path d="M17 16h14v14H17z" fill="#fff" stroke="#6cb35d" /><path d="M18 17h5v3h-5zM25 17h5v3h-5zM18 22h5v3h-5zM25 22h5v3h-5zM18 27h5v2h-5zM25 27h5v2h-5z" fill="#6cb35d" /></svg>
  ) },
  { name: "Picture viewer", tile: "border-[#b9b7b0] bg-[#84807c]", icon: (
    <svg viewBox="0 0 32 32" className="size-8"><rect x="1" y="6" width="26" height="25" fill="#1f4fc4" /><rect x="4" y="9" width="20" height="19" fill="#6fc4ef" /><path d="M4 24q10-5 20 0v4H4z" fill="#b58a52" /><circle cx="20" cy="13" r="11.500" fill="#d9ab7c" stroke="#0b1230" strokeWidth="2.500" /><path d="M10 11q5-8 13-6q-8 3-11 14q-3-3-2-8z" fill="#8fd4f4" /><path d="M15 15q6-6 12-1q-5 5-12 1z" fill="#fff" stroke="#3c1d10" strokeWidth="1.500" /><circle cx="22" cy="14" r="3" fill="#3a150c" /></svg>
  ) },
];

function Taskbar() {
  return (
    <footer className="flex h-11 shrink-0 items-stretch overflow-hidden border-t border-[#8d8d88] bg-[linear-gradient(90deg,#4e3f3e_0,#6b5553_60px,#8b9682_110px,#93a589_180px,#8d9a82_280px,#8f8f88_360px,#6b4b48_420px,#85827e_460px,#8a8680_540px,#6f5f68_600px,#879a80_660px,#64625f_700px,#90a686_760px,#7e8b79_850px,#6c625e_900px,#7d7770_1000px,#5e5658_1090px,#63705a_1150px,#5d5248_1200px,#46573f_1280px)]">
      <button aria-label="Start" className="flex w-[58px] items-center pl-2"><StartOrb /></button>
      <ul className="flex">
        {apps.map((app) => (
          <li key={app.name} className="flex w-[58px] items-center justify-center">
            <button
              aria-label={app.name}
              className={`flex h-10 items-center justify-center ${app.tile ? `${app.stacked ? "w-[50px] mr-1 shadow-[3px_0_0_-1px_#8c8a84,4px_0_0_-1px_#d5d4d0]" : "w-[54px]"} rounded-[3px] border bg-[linear-gradient(135deg,rgba(255,255,255,.45),rgba(255,255,255,0)_60%)] ${app.tile}` : "w-[54px]"}`}
            >
              {app.icon}
            </button>
          </li>
        ))}
      </ul>
      <div className="flex flex-1 items-center gap-[7px] pl-2">
        <button aria-label="Show hidden icons"><svg viewBox="0 0 8 4" className="h-1 w-2"><path d="M0 4L4 0L8 4z" fill="#fff" /></svg></button>
        <svg viewBox="0 0 16 16" className="ml-2 size-4" fill="none" stroke="#fff" strokeWidth="1.500"><path d="M9 3H2.500v11.500H8M5 1.500h3" /><path d="M5 5.500v6.500" strokeWidth="1" /><path d="M7 6h8v2q0 3-3 3h-2q-3 0-3-3z" fill="#fff" stroke="none" /><path d="M9 3v3M13 3v3M11 11v4" /></svg>
        <svg viewBox="0 0 18 16" className="h-4 w-[18px]"><path d="M1 12h2v3H1zM4 10h2v5H4zM7 7h2v8H7zM10 4h2v11h-2zM13 1h2v14h-2z" fill="#9a9a96" stroke="#444" strokeWidth=".5" /><path d="M9 8l7 7m0-7l-7 7" stroke="#e01818" strokeWidth="2.500" /></svg>
        <svg viewBox="0 0 16 16" className="size-4"><path d="M4 1l3 2l4-2l1 5l3 2l-2 7H2L0 12l3-3z" fill="#f08a2b" /><path d="M4 7l4 8H0z" fill="#fbd21e" stroke="#8a5a00" strokeWidth=".5" /><path d="M4 9.500v3M4 13.200v1" stroke="#222" /></svg>
        <svg viewBox="0 0 16 16" className="size-4" fill="none" stroke="#fff"><path d="M1 5.500h3l4-4v13l-4-4H1z" fill="#e8e8e8" /><path d="M10 5q2 3 0 6M12 3.500q3 4.500 0 9M14 2q4 6 0 12" /></svg>
        <svg viewBox="0 0 17 16" className="ml-0.5 h-4 w-[17px]"><path d="M2 1v15" stroke="#fff" strokeWidth="1.500" /><path d="M3 2q3-1 5 0t6 0v7q-4 1-6 0t-5 0z" fill="#fff" /><circle cx="12" cy="11.500" r="4.500" fill="#d8252a" /><path d="M10 9.500l4 4m0-4l-4 4" stroke="#fff" strokeWidth="1.300" /></svg>
        <p className="flex-1 pb-1 text-center text-[12px] leading-[17px] text-white">
          7:06 PM<br />7/21/2017
        </p>
      </div>
      <button aria-label="Show desktop" className="w-[14px] border-l border-[#9a9d90] bg-white/15" />
    </footer>
  );
}

export default function App() {
  return (
    <div className="flex min-h-screen flex-col bg-[#002060] font-['Noto_Sans','Open_Sans',sans-serif]">
      <TitleBar />
      <RibbonTabs />
      <main className="flex flex-1">
        <div className="relative flex min-w-0 flex-1 flex-col">
          <SheetToolbar />
          <section className="ml-0.5 mr-[15px] bg-white font-['Liberation_Sans',Arial,sans-serif]">
            <div className="h-[17px] bg-[#800000]" />
            <ReportHeading />
            <PondTable />
            <div className="flex items-start pb-[7px] pl-[7px] pr-0.5 pt-[15px] font-['Lato',sans-serif]">
              <div className="w-[448px] grow"><StockChart /></div>
              <div className="ml-px w-[186px] grow"><MortalityChart /></div>
              <div className="ml-px w-[207px] grow"><FcrChart /></div>
              <div className="ml-0.5 w-[393px] grow"><WeightChart /></div>
            </div>
          </section>
          <div className="pointer-events-none absolute inset-y-0 left-[33px] w-px bg-[#606060]" />
        </div>
        <VerticalScrollbar />
      </main>
      <HorizontalScrollbar />
      <StatusBar />
      <Taskbar />
    </div>
  );
}
